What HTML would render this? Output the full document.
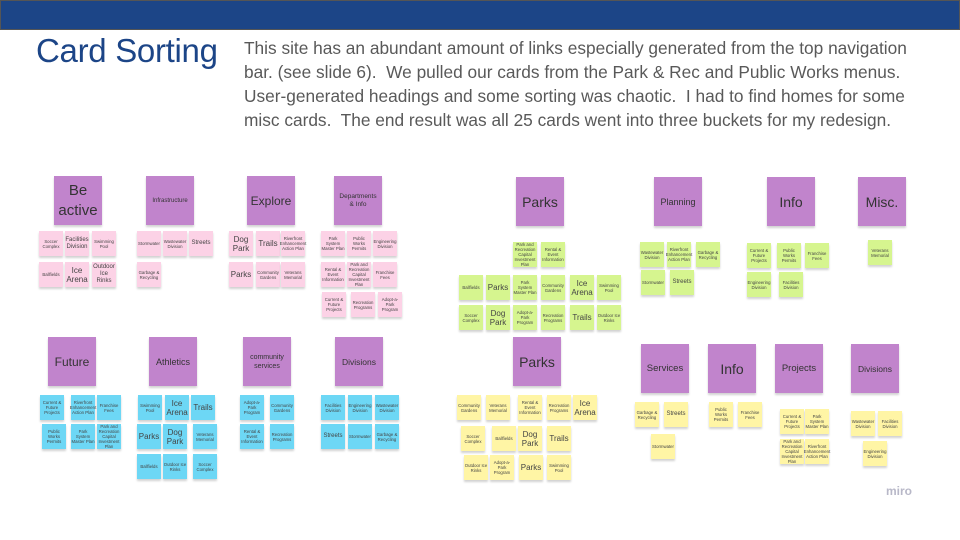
<!DOCTYPE html>
<html><head><meta charset="utf-8"><style>
*{margin:0;padding:0;box-sizing:border-box}
body{width:960px;height:540px;position:relative;background:#fff;overflow:hidden;font-family:"Liberation Sans",sans-serif}
.bar{position:absolute;left:0;top:0;width:960px;height:30px;background:#1c4587;border:1px solid #555}
h1{position:absolute;left:36px;top:32px;font-weight:normal;font-size:33px;color:#1c4587;letter-spacing:-0.3px}
.p{position:absolute;left:244px;top:36px;white-space:nowrap;font-size:17.3px;line-height:24px;color:#595959}
.n,.h{position:absolute;display:flex;align-items:center;justify-content:center;text-align:center;color:#444;box-shadow:0 2px 2px rgba(0,0,0,.18)}
.n{width:24px;height:25px;font-size:4.3px;line-height:5px}
.h{width:48px;height:49px;background:#c184cc;font-size:9px;color:#333}
.b{font-size:8px;line-height:9px}
.m{font-size:6px;line-height:7px}
.H{font-size:15px;line-height:20px}
.k{background:#fcd2e6}.g{background:#d6f58f}.c{background:#6dd7f5}.y{background:#fff5a5}
.miro{position:absolute;left:886px;top:484px;font-size:12px;color:#b8b8c8;font-weight:bold}
</style></head><body>
<div class="bar"></div>
<h1>Card Sorting</h1>
<div class="p">This site has an abundant amount of links especially generated from the top navigation<br>bar. (see slide 6).&nbsp; We pulled our cards from the Park &amp; Rec and Public Works menus.<br>User-generated headings and some sorting was chaotic.&nbsp; I had to find homes for some<br>misc cards.&nbsp; The end result was all 25 cards went into three buckets for my redesign.</div>

<!-- Q1 pink -->
<div class="h H" style="left:54px;top:176px">Be<br>active</div>
<div class="n k" style="left:39px;top:231px">Soccer Complex</div>
<div class="n k m" style="left:65px;top:231px">Facilities Division</div>
<div class="n k" style="left:92px;top:231px">Swimming Pool</div>
<div class="n k" style="left:39px;top:262px">Ballfields</div>
<div class="n k b" style="left:65px;top:262px">Ice Arena</div>
<div class="n k m" style="left:92px;top:262px">Outdoor Ice Rinks</div>
<div class="h" style="left:146px;top:176px;font-size:6px">Infrastructure</div>
<div class="n k" style="left:137px;top:231px">Stormwater</div>
<div class="n k" style="left:163px;top:231px">Wastewater Division</div>
<div class="n k m" style="left:189px;top:231px">Streets</div>
<div class="n k" style="left:137px;top:262px">Garbage &amp; Recycling</div>
<div class="h" style="left:247px;top:176px;font-size:12px">Explore</div>
<div class="n k b" style="left:229px;top:231px">Dog Park</div>
<div class="n k b" style="left:256px;top:231px">Trails</div>
<div class="n k" style="left:281px;top:231px">Riverfront Enhancement Action Plan</div>
<div class="n k b" style="left:229px;top:262px">Parks</div>
<div class="n k" style="left:256px;top:262px">Community Gardens</div>
<div class="n k" style="left:281px;top:262px">Veterans Memorial</div>
<div class="h" style="left:334px;top:176px;font-size:6.5px;line-height:8px">Departments<br>&amp; Info</div>
<div class="n k" style="left:321px;top:231px">Park System Master Plan</div>
<div class="n k" style="left:347px;top:231px">Public Works Permits</div>
<div class="n k" style="left:373px;top:231px">Engineering Division</div>
<div class="n k" style="left:321px;top:262px">Rental &amp; Event Information</div>
<div class="n k" style="left:347px;top:262px">Park and Recreation Capital Investment Plan</div>
<div class="n k" style="left:373px;top:262px">Franchise Fees</div>
<div class="n k" style="left:322px;top:292px">Current &amp; Future Projects</div>
<div class="n k" style="left:351px;top:292px">Recreation Programs</div>
<div class="n k" style="left:378px;top:292px">Adopt-a-Park Program</div>

<!-- Q3 blue -->
<div class="h" style="left:48px;top:337px;font-size:12px">Future</div>
<div class="n c" style="left:40px;top:395px">Current &amp; Future Projects</div>
<div class="n c" style="left:71px;top:395px">Riverfront Enhancement Action Plan</div>
<div class="n c" style="left:97px;top:395px">Franchise Fees</div>
<div class="n c" style="left:42px;top:424px">Public Works Permits</div>
<div class="n c" style="left:71px;top:424px">Park System Master Plan</div>
<div class="n c" style="left:97px;top:424px">Park and Recreation Capital Investment Plan</div>
<div class="h" style="left:149px;top:337px;font-size:9px">Athletics</div>
<div class="n c" style="left:138px;top:395px">Swimming Pool</div>
<div class="n c b" style="left:165px;top:395px">Ice Arena</div>
<div class="n c b" style="left:191px;top:395px">Trails</div>
<div class="n c b" style="left:137px;top:424px">Parks</div>
<div class="n c b" style="left:163px;top:424px">Dog Park</div>
<div class="n c" style="left:193px;top:424px">Veterans Memorial</div>
<div class="n c" style="left:137px;top:454px">Ballfields</div>
<div class="n c" style="left:163px;top:454px">Outdoor Ice Rinks</div>
<div class="n c" style="left:193px;top:454px">Soccer Complex</div>
<div class="h" style="left:243px;top:337px;font-size:7px;line-height:9px">community services</div>
<div class="n c" style="left:240px;top:395px">Adopt-a-Park Program</div>
<div class="n c" style="left:270px;top:395px">Community Gardens</div>
<div class="n c" style="left:240px;top:424px">Rental &amp; Event Information</div>
<div class="n c" style="left:270px;top:424px">Recreation Programs</div>
<div class="h" style="left:335px;top:337px;font-size:8.5px">Divisions</div>
<div class="n c" style="left:321px;top:395px">Facilities Division</div>
<div class="n c" style="left:348px;top:395px">Engineering Division</div>
<div class="n c" style="left:375px;top:395px">Wastewater Division</div>
<div class="n c m" style="left:321px;top:424px">Streets</div>
<div class="n c" style="left:348px;top:424px">Stormwater</div>
<div class="n c" style="left:375px;top:424px">Garbage &amp; Recycling</div>

<!-- Q2 green -->
<div class="h" style="left:516px;top:177px;font-size:14px">Parks</div>
<div class="n g" style="left:513px;top:242px">Park and Recreation Capital Investment Plan</div>
<div class="n g" style="left:541px;top:242px">Rental &amp; Event Information</div>
<div class="n g" style="left:459px;top:275px">Ballfields</div>
<div class="n g b" style="left:486px;top:275px">Parks</div>
<div class="n g" style="left:513px;top:275px">Park System Master Plan</div>
<div class="n g" style="left:541px;top:275px">Community Gardens</div>
<div class="n g b" style="left:570px;top:275px">Ice Arena</div>
<div class="n g" style="left:597px;top:275px">Swimming Pool</div>
<div class="n g" style="left:459px;top:305px">Soccer Complex</div>
<div class="n g b" style="left:486px;top:305px">Dog Park</div>
<div class="n g" style="left:513px;top:305px">Adopt-a-Park Program</div>
<div class="n g" style="left:541px;top:305px">Recreation Programs</div>
<div class="n g b" style="left:570px;top:305px">Trails</div>
<div class="n g" style="left:597px;top:305px">Outdoor Ice Rinks</div>
<div class="h" style="left:654px;top:177px;font-size:9px">Planning</div>
<div class="n g" style="left:640px;top:242px">Wastewater Division</div>
<div class="n g" style="left:667px;top:242px">Riverfront Enhancement Action Plan</div>
<div class="n g" style="left:696px;top:242px">Garbage &amp; Recycling</div>
<div class="n g" style="left:641px;top:270px">Stormwater</div>
<div class="n g m" style="left:670px;top:270px">Streets</div>
<div class="h" style="left:767px;top:177px;font-size:14px">Info</div>
<div class="n g" style="left:747px;top:243px">Current &amp; Future Projects</div>
<div class="n g" style="left:777px;top:243px">Public Works Permits</div>
<div class="n g" style="left:805px;top:243px">Franchise Fees</div>
<div class="n g" style="left:747px;top:272px">Engineering Division</div>
<div class="n g" style="left:779px;top:272px">Facilities Division</div>
<div class="h" style="left:858px;top:177px;font-size:14px">Misc.</div>
<div class="n g" style="left:868px;top:240px">Veterans Memorial</div>

<!-- Q4 yellow -->
<div class="h" style="left:513px;top:337px;font-size:14px">Parks</div>
<div class="n y" style="left:457px;top:395px">Community Gardens</div>
<div class="n y" style="left:486px;top:395px">Veterans Memorial</div>
<div class="n y" style="left:518px;top:395px">Rental &amp; Event Information</div>
<div class="n y" style="left:547px;top:395px">Recreation Programs</div>
<div class="n y b" style="left:573px;top:395px">Ice Arena</div>
<div class="n y" style="left:461px;top:426px">Soccer Complex</div>
<div class="n y" style="left:492px;top:426px">Ballfields</div>
<div class="n y b" style="left:518px;top:426px">Dog Park</div>
<div class="n y b" style="left:547px;top:426px">Trails</div>
<div class="n y" style="left:464px;top:455px">Outdoor Ice Rinks</div>
<div class="n y" style="left:490px;top:455px">Adopt-a-Park Program</div>
<div class="n y b" style="left:519px;top:455px">Parks</div>
<div class="n y" style="left:547px;top:455px">Swimming Pool</div>
<div class="h" style="left:641px;top:344px;font-size:9.5px">Services</div>
<div class="n y" style="left:635px;top:402px">Garbage &amp; Recycling</div>
<div class="n y m" style="left:664px;top:402px">Streets</div>
<div class="n y" style="left:651px;top:434px">Stormwater</div>
<div class="h" style="left:708px;top:344px;font-size:14px">Info</div>
<div class="n y" style="left:709px;top:402px">Public Works Permits</div>
<div class="n y" style="left:738px;top:402px">Franchise Fees</div>
<div class="h" style="left:775px;top:344px;font-size:9.5px">Projects</div>
<div class="n y" style="left:780px;top:409px">Current &amp; Future Projects</div>
<div class="n y" style="left:805px;top:409px">Park System Master Plan</div>
<div class="n y" style="left:780px;top:439px">Park and Recreation Capital Investment Plan</div>
<div class="n y" style="left:805px;top:439px">Riverfront Enhancement Action Plan</div>
<div class="h" style="left:851px;top:344px;font-size:8.5px">Divisions</div>
<div class="n y" style="left:851px;top:411px">Wastewater Division</div>
<div class="n y" style="left:878px;top:411px">Facilities Division</div>
<div class="n y" style="left:863px;top:441px">Engineering Division</div>
<div class="miro">miro</div>
</body></html>
